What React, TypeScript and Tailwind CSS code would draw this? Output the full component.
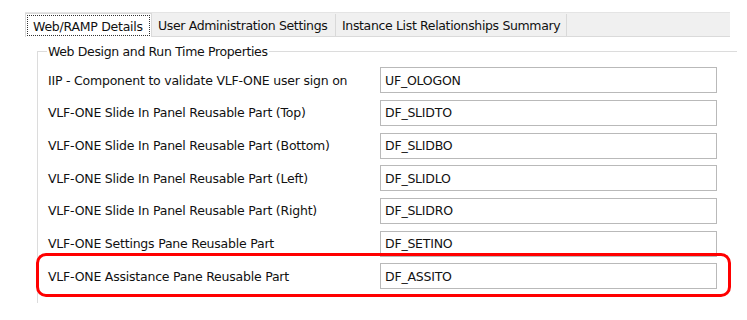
import React from "react";

const rows = [
  { label: "IIP - Component to validate VLF-ONE user sign on", value: "UF_OLOGON" },
  { label: "VLF-ONE Slide In Panel Reusable Part (Top)", value: "DF_SLIDTO" },
  { label: "VLF-ONE Slide In Panel Reusable Part (Bottom)", value: "DF_SLIDBO" },
  { label: "VLF-ONE Slide In Panel Reusable Part (Left)", value: "DF_SLIDLO" },
  { label: "VLF-ONE Slide In Panel Reusable Part (Right)", value: "DF_SLIDRO" },
  { label: "VLF-ONE Settings Pane Reusable Part", value: "DF_SETINO" },
  { label: "VLF-ONE Assistance Pane Reusable Part", value: "DF_ASSITO" },
];

export default function App() {
  return (
    <div className="relative w-[747px] h-[320px] overflow-hidden bg-white text-[12.5px] leading-[15px] tracking-[-0.35px] text-[#111] font-['DejaVu_Sans',Verdana,sans-serif]">
      {/* Tab strip */}
      <div className="ml-[25px] mt-[12px] w-[705px] h-[25px] flex items-end bg-[#f0f0f0] border-t border-[#e4e4e4] border-b border-b-[#dadada]">
        <div className="w-[127px] h-[24px] -mb-px bg-white border border-b-0 border-[#d9d9d9] p-[1px]">
          <div className="h-full border border-dotted border-[#333] pl-[5px] pt-[3px] tracking-[-0.25px]">Web/RAMP Details</div>
        </div>
        <div className="w-[184px] h-[22px] border-r border-[#d9d9d9] pl-[6px] pt-[4px]">User Administration Settings</div>
        <div className="w-[231px] h-[22px] border-r border-[#d9d9d9] pl-[6px] pt-[4px]">Instance List Relationships Summary</div>
      </div>

      {/* Group box */}
      <fieldset className="ml-[37px] mt-[7px] border-t border-l border-[#dcdcdc] w-[700px] pt-[5px] pb-[10px]">
        <legend className="ml-[9px] px-[1px]">Web Design and Run Time Properties</legend>
        <div className="flex flex-col tracking-[-0.22px]">
          {rows.map((r) => (
            <div key={r.value} className="h-[32.67px] flex items-center pl-[10px]">
              <div className="w-[332px]">{r.label}</div>
              <div className="w-[337px] h-[26px] border border-[#b9b9b9] flex items-center pl-[4px]">{r.value}</div>
            </div>
          ))}
        </div>
      </fieldset>

      {/* Highlight annotation */}
      <div className="absolute left-[36px] top-[253px] w-[695px] h-[44px] border-[3px] border-[#ff0000] rounded-[10px]" />
    </div>
  );
}
